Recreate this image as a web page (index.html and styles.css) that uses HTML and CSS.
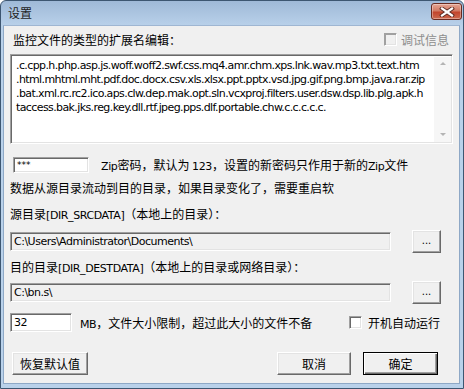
FILE: index.html
```html
<!DOCTYPE html>
<html lang="zh-CN">

<head>
  <meta charset="UTF-8">
  <title>设置</title>
  <link rel="stylesheet" href="styles.css">
</head>

<body>
  <div class="window">
    <div class="title-bar">
      <span class="title">设置</span>
      <span class="close-btn">
        <svg width="16" height="10" viewBox="0 0 16 10">
          <path d="M3 1.5 L13 8.5 M13 1.5 L3 8.5" stroke="#5a2a22" stroke-width="4" stroke-linecap="square" />
          <path d="M3 1.5 L13 8.5 M13 1.5 L3 8.5" stroke="#fff" stroke-width="2.2" stroke-linecap="square" />
        </svg>
      </span>
    </div>
    <div class="client">
      <div class="head">
        <span class="cn">监控文件的类型的扩展名编辑：</span>
        <label class="check disabled"><span class="box"></span><span class="cn">调试信息</span></label>
      </div>

      <div class="memo">
        <div class="memo-text">.c.cpp.h.php.asp.js.woff.woff2.swf.css.mq4.amr.chm.xps.lnk.wav.mp3.txt.text.htm<br>.html.mhtml.mht.pdf.doc.docx.csv.xls.xlsx.ppt.pptx.vsd.jpg.gif.png.bmp.java.rar.zip<br>.bat.xml.rc.rc2.ico.aps.clw.dep.mak.opt.sln.vcxproj.filters.user.dsw.dsp.lib.plg.apk.h<br>taccess.bak.jks.reg.key.dll.rtf.jpeg.pps.dlf.portable.chw.c.c.c.c.c.</div>
        <div class="scrollbar">
          <span class="arrow up"></span>
          <span class="arrow down"></span>
        </div>
      </div>

      <div class="row zip-row">
        <span class="edit edit-zip">***</span>
        <span class="cn"><span class="lat">Zip</span>密码，默认为 <span class="lat">123</span>，设置的新密码只作用于新的<span class="lat">Zip</span>文件</span>
      </div>

      <div class="line cn first">数据从源目录流动到目的目录，如果目录变化了，需要重启软</div>
      <div class="line cn">源目录<span class="lat">[DIR_SRCDATA]</span>（本地上的目录）：</div>

      <div class="row path-row">
        <span class="edit edit-path">C:\Users\Administrator\Documents\</span>
        <span class="btn btn-browse">...</span>
      </div>

      <div class="line cn tight">目的目录<span class="lat">[DIR_DESTDATA]</span>（本地上的目录或网络目录）：</div>

      <div class="row path-row dest">
        <span class="edit edit-path">C:\bn.s\</span>
        <span class="btn btn-browse">...</span>
      </div>

      <div class="row size-row">
        <span class="edit edit-size">32</span>
        <span class="cn size-text"><span class="lat">MB</span>，文件大小限制，超过此大小的文件不备</span>
        <label class="check autorun"><span class="box"></span><span class="cn">开机自动运行</span></label>
      </div>

      <div class="row buttons">
        <span class="btn btn-reset cn">恢复默认值</span>
        <span class="btn btn-cancel cn">取消</span>
        <span class="btn btn-ok cn">确定</span>
      </div>
    </div>
  </div>
</body>

</html>
```

FILE: styles.css
```css
* {
  box-sizing: border-box;
}

body {
  margin: 0;
  width: 464px;
  height: 389px;
  overflow: hidden;
  font-family: "Noto Sans CJK SC", sans-serif;
  font-size: 12px;
  color: #000;
}

.cn {
  font-family: "Noto Sans CJK SC", sans-serif;
  font-size: 12px;
}

.lat {
  font-family: "DejaVu Sans", sans-serif;
  font-size: 11px;
  letter-spacing: -0.4px;
}

.window {
  width: 464px;
  height: 389px;
  display: flex;
  flex-direction: column;
  border: 1px solid #3d5671;
  border-radius: 6px 6px 0 0;
  background: linear-gradient(#9fb9d7, #b9d1ea 25px, #b9d1ea);
  padding: 0 3px 4px 2px;
}

.title-bar {
  height: 24px;
  display: flex;
  align-items: center;
  justify-content: space-between;
  padding: 0 0 0 5px;
}

.title {
  font-size: 12px;
  color: #1e1e1e;
  margin-top: -1px;
}

.close-btn {
  width: 31px;
  height: 17px;
  margin-top: -3px;
  margin-right: -2px;
  display: flex;
  align-items: center;
  justify-content: center;
  border: 1px solid #6a2a20;
  border-radius: 3px;
  background: linear-gradient(#e4a594, #d27a64 45%, #c2452d 55%, #cc6a50);
  box-shadow: inset 0 0 0 1px rgba(255, 255, 255, 0.35);
}

.client {
  flex: 1;
  background: #f0f0f0;
  padding: 0 6px 0 6px;
  display: flex;
  flex-direction: column;
  border: 1px solid #8ea8c6;
  border-top-color: #9fb6d2;
}

.head {
  margin-top: 6px;
  height: 15px;
  line-height: 15px;
  display: flex;
  justify-content: space-between;
  padding: 0 4px 0 3px;
}

.check {
  display: flex;
  align-items: center;
  gap: 4px;
}

.check .box {
  width: 13px;
  height: 13px;
  background: #fff;
  border: 1px solid;
  border-color: #a0a0a0 #fff #fff #a0a0a0;
  box-shadow: inset 1px 1px #696969, inset -1px -1px #e3e3e3;
}

.check.disabled {
  color: #8d8d8d;
}

.check.disabled .box {
  background: #f0f0f0;
  box-shadow: inset 1px 1px #a0a0a0, inset -1px -1px #e3e3e3;
}

.memo {
  margin-top: 7px;
  height: 90px;
  display: flex;
  background: #fff;
  border: 1px solid;
  border-color: #a0a0a0 #fff #fff #a0a0a0;
  box-shadow: inset 1px 1px #696969, inset -1px -1px #e3e3e3;
}

.memo-text {
  flex: 1;
  padding: 4px 0 0 5px;
  font-family: "DejaVu Sans", sans-serif;
  font-size: 11px;
  letter-spacing: -0.6px;
  line-height: 14px;
  white-space: nowrap;
  overflow: hidden;
}

.scrollbar {
  width: 17px;
  margin: 2px 1px 1px 0;
  background: #f6f6f6;
  display: flex;
  flex-direction: column;
  justify-content: space-between;
  align-items: center;
  padding: 5px 0 6px;
}

.arrow {
  width: 0;
  height: 0;
  border-left: 3px solid transparent;
  border-right: 3px solid transparent;
}

.arrow.up {
  border-bottom: 3px solid #b4b4b4;
}

.arrow.down {
  border-top: 3px solid #b4b4b4;
}

.row {
  display: flex;
  align-items: center;
}

.edit {
  display: flex;
  align-items: center;
  height: 19px;
  padding: 0 3px;
  background: #fff;
  border: 1px solid;
  border-color: #a0a0a0 #fff #fff #a0a0a0;
  box-shadow: inset 1px 1px #696969, inset -1px -1px #e3e3e3;
  font-family: "DejaVu Sans", sans-serif;
  font-size: 11px;
  letter-spacing: -0.5px;
  white-space: nowrap;
}

.zip-row {
  margin-top: 12px;
  gap: 12px;
}

.edit-zip {
  width: 76px;
  height: 16px;
  margin-left: 3px;
  font-size: 9px;
  letter-spacing: 0;
}

.line {
  height: 14px;
  line-height: 14px;
  white-space: nowrap;
}

.line.first {
  margin-top: 8px;
}

.line + .line {
  margin-top: 12px;
}

.line.tight {
  margin-top: 7px;
}

.path-row {
  margin-top: 9px;
  height: 23px;
}

.path-row.dest {
  margin-top: 7px;
}

.edit-path {
  width: 381px;
  background: #f0f0f0;
}

.btn {
  display: flex;
  align-items: center;
  justify-content: center;
  background: #f0f0f0;
  border: 1px solid;
  border-color: #fff #696969 #696969 #fff;
  box-shadow: inset -1px -1px #a0a0a0, inset 1px 1px #e3e3e3;
}

.btn-browse {
  width: 29px;
  height: 23px;
  margin-left: 21px;
  font-family: "DejaVu Sans", sans-serif;
  font-size: 10px;
  padding-bottom: 3px;
}

.size-row {
  margin-top: 9px;
}

.edit-size {
  width: 62px;
}

.size-text {
  margin-left: 8px;
}

.autorun {
  margin-left: auto;
  margin-right: 13px;
  gap: 6px;
}

.buttons {
  margin-top: 20px;
  height: 23px;
}

.btn-reset {
  width: 76px;
  height: 23px;
  margin-left: 2px;
}

.btn-cancel {
  width: 74px;
  height: 23px;
  margin-left: auto;
}

.btn-ok {
  width: 75px;
  height: 23px;
  margin-left: 12px;
  margin-right: 15px;
  border-color: #000;
  box-shadow: inset 1px 1px #fff, inset -1px -1px #696969, inset -2px -2px #a0a0a0;
}
```
